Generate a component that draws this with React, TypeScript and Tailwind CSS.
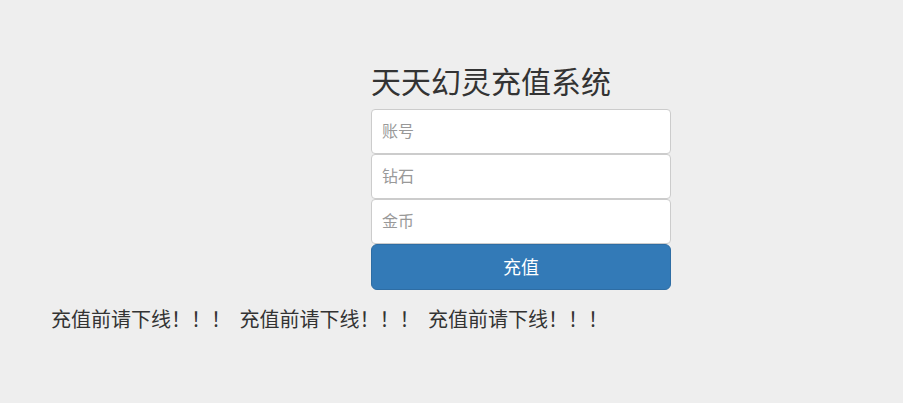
import React from "react";

export default function App() {
  const font = { fontFamily: '"Noto Sans CJK SC", "Noto Sans", sans-serif' };
  const seg = "充值前请下线！！！";
  return (
    <div className="min-h-[403px] w-full bg-[#eeeeee] text-[#333333]" style={font}>
      <div className="pt-[64px] pl-[371px]">
        <div className="w-[300px]">
          <h2 className="text-[30px] leading-[33px] mb-[12px] font-normal text-[#333333]">天天幻灵充值系统</h2>
          <div className="flex flex-col">
            <input
              className="h-[45px] w-full rounded-[4px] border border-[#cccccc] bg-white px-[10px] pb-[3px] text-[16px] text-[#555555] placeholder:text-[#999999] outline-none"
              placeholder="账号"
            />
            <input
              className="h-[45px] w-full rounded-[4px] border border-[#cccccc] bg-white px-[10px] pb-[3px] text-[16px] text-[#555555] placeholder:text-[#999999] outline-none"
              placeholder="钻石"
            />
            <input
              className="h-[45px] w-full rounded-[4px] border border-[#cccccc] bg-white px-[10px] pb-[3px] text-[16px] text-[#555555] placeholder:text-[#999999] outline-none"
              placeholder="金币"
            />
            <button className="h-[46px] w-full rounded-[6px] border border-[#2e6da4] bg-[#337ab7] pb-[2px] text-[18px] text-white">
              充值
            </button>
          </div>
        </div>
      </div>
      <div className="mt-[15px] pl-[51px] text-[20px] leading-[28px] whitespace-pre text-[#333333] [word-spacing:4px]">
        {seg + " " + seg + " " + seg}
      </div>
    </div>
  );
}
